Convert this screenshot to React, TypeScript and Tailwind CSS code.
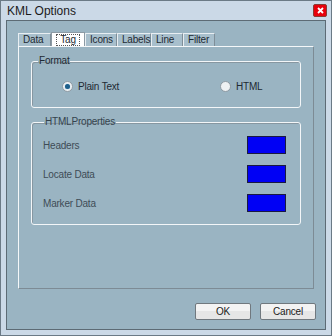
import React from 'react';

const tabs = ['Data', 'Tag', 'Icons', 'Labels', 'Line', 'Filter'];
const tabWidths = ['w-[33px]', 'w-[34px]', 'w-[32px]', 'w-[34px]', 'w-[32px]', 'w-[32px]'];

const rows = ['Headers', 'Locate Data', 'Marker Data'];

const Radio: React.FC<{ checked?: boolean; label: string }> = ({ checked, label }) => (
  <label className="flex items-center gap-[5px]">
    <span className="flex h-[11px] w-[11px] items-center justify-center rounded-full border border-[#8e9aa3] bg-[#eef1f3]">
      {checked && <span className="h-[5px] w-[5px] rounded-full bg-[#1f5f8a] shadow-[0_0_1px_#6fb0e0]" />}
    </span>
    <span>{label}</span>
  </label>
);

const App: React.FC = () => {
  return (
    <div
      className="flex h-[336px] w-[332px] flex-col border border-[#6b7a86] bg-[#cbd9e7] text-[10px] tracking-[-0.2px] text-[#1e2a33]"
      style={{ fontFamily: '"Liberation Sans", Arial, sans-serif' }}
    >
      {/* title bar */}
      <div className="flex h-[19px] items-center justify-between pl-[6px] pr-[4px]">
        <span className="text-[12px] tracking-normal text-[#1b1b1b]">KML Options</span>
        <span className="flex h-[13px] w-[14px] items-center justify-center rounded-[2px] border border-[#8a3a32] bg-red-600">
          <svg width="7" height="7" viewBox="0 0 7 7">
            <path d="M1 1L6 6M6 1L1 6" stroke="#fff" strokeWidth="1.8" />
          </svg>
        </span>
      </div>

      {/* client area */}
      <div className="mx-[5px] mb-[5px] flex flex-1 flex-col border border-[#5d6b75] bg-[#9ab4c2] px-[11px] pt-[10px]">
        {/* tab strip */}
        <div className="flex h-[15px] items-end">
          {tabs.map((t, i) =>
            t === 'Tag' ? (
              <div
                key={t}
                className={`${tabWidths[i]} -mb-[1px] flex h-[15px] items-start justify-center border border-b-0 border-[#8c9aa4] bg-white pt-[1px]`}
              >
                <span className="border border-dotted border-[#555] px-[3px] leading-[10px]">{t}</span>
              </div>
            ) : (
              <div
                key={t}
                className={`${tabWidths[i]} flex h-[13px] items-center border border-b-0 border-[#e8eef2] border-r-[#7f8e98] bg-[#a8bfcc] pl-[4px] leading-none`}
              >
                {t}
              </div>
            )
          )}
        </div>

        {/* tab panel */}
        <div className="flex h-[243px] w-[296px] flex-col gap-[8px] border border-[#f4f7f9] border-b-[#7d8b95] border-r-[#7d8b95] px-[12px] pt-[8px]">
          <fieldset className="h-[53px] rounded-[3px] border border-[#f3f6f8] px-[6px] shadow-[inset_1px_1px_0_#8797a1]">
            <legend className="px-[1px] leading-[12px]">Format</legend>
            <div className="flex pt-[12px]">
              <div className="w-[182px] pl-[24px]">
                <Radio checked label="Plain Text" />
              </div>
              <Radio label="HTML" />
            </div>
          </fieldset>

          <fieldset className="h-[109px] rounded-[3px] border border-[#f3f6f8] pl-[11px] pr-[14px] shadow-[inset_1px_1px_0_#8797a1]">
            <legend className="ml-[1px] px-[1px] leading-[12px] text-[#34434d]">HTMLProperties</legend>
            <div className="flex flex-col gap-[11px] pt-[8px]">
              {rows.map((r) => (
                <div key={r} className="flex h-[18px] items-center justify-between text-[#3e4c56]">
                  <span>{r}</span>
                  <span className="h-[18px] w-[39px] border border-[#1a1a40] bg-[#0000f5]" />
                </div>
              ))}
            </div>
          </fieldset>
        </div>

        {/* buttons */}
        <div className="mt-[14px] flex w-[298px] justify-end gap-[9px]">
          <button className="flex h-[17px] w-[56px] items-center justify-center rounded-[2px] border border-[#70787e] bg-[#e6e6e6] text-[#1b1b1b] shadow-[inset_0_7px_0_#f3f3f3]">
            OK
          </button>
          <button className="flex h-[17px] w-[56px] items-center justify-center rounded-[2px] border border-[#70787e] bg-[#e6e6e6] text-[#1b1b1b] shadow-[inset_0_7px_0_#f3f3f3]">
            Cancel
          </button>
        </div>
      </div>
    </div>
  );
};

export default App;
